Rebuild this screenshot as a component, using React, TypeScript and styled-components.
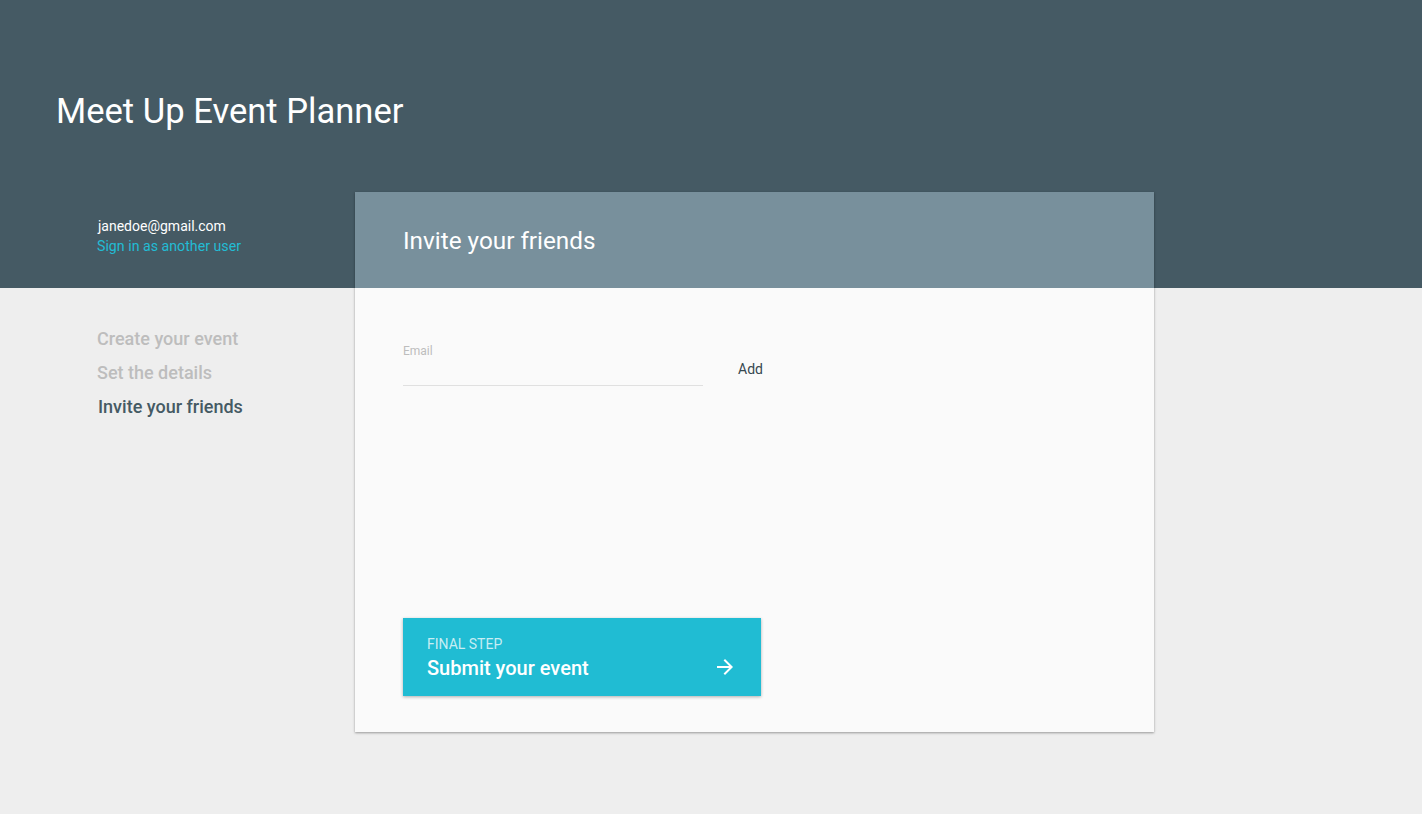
import React from "react";
import styled, { createGlobalStyle } from "styled-components";

const Global = createGlobalStyle`
  html, body { margin: 0; padding: 0; }
  body {
    font-family: Roboto, "Noto Sans", Arial, sans-serif;
    background: linear-gradient(#455a64 0, #455a64 288px, #eeeeee 288px);
    min-height: 814px;
    -webkit-font-smoothing: antialiased;
  }
`;

const Page = styled.div`
  min-height: 814px;
`;

const Header = styled.header`
  height: 192px;
  box-sizing: border-box;
  padding: 30px 0 0 56px;
  display: flex;
  align-items: center;
`;

const Title = styled.h1`
  margin: 0;
  font-size: 34.6px;
  font-weight: 400;
  color: #ffffff;
  line-height: 40px;
`;

const Main = styled.div`
  display: flex;
  align-items: flex-start;
`;

const Sidebar = styled.aside`
  flex: none;
  width: 355px;
  box-sizing: border-box;
  padding: 24px 0 0 97px;
  display: flex;
  flex-direction: column;
`;

const UserEmail = styled.div`
  font-size: 14px;
  line-height: 20px;
  color: #ffffff;
  padding-left: 1px;
`;

const SwitchLink = styled.a`
  font-size: 14.2px;
  line-height: 20px;
  color: #22bcd4;
  text-decoration: none;
  cursor: pointer;
`;

const Steps = styled.nav`
  margin-top: 66px;
  display: flex;
  flex-direction: column;
`;

const Step = styled.div<{ $active?: boolean }>`
  font-size: 18px;
  font-weight: 500;
  line-height: 34px;
  color: ${(p) => (p.$active ? "#455a64" : "#bdbdbd")};
  padding-left: ${(p) => (p.$active ? "1px" : "0")};
`;

const Card = styled.section`
  flex: none;
  width: 799px;
  height: 540px;
  display: flex;
  flex-direction: column;
  background: #fafafa;
  box-shadow: 0 1px 2px rgba(0, 0, 0, 0.3), 0 1px 4px rgba(0, 0, 0, 0.08);
`;

const CardHeader = styled.div`
  height: 96px;
  flex: none;
  box-sizing: border-box;
  padding: 2px 0 0 48px;
  display: flex;
  align-items: center;
  background: #78909c;
`;

const CardTitle = styled.h2`
  margin: 0;
  font-size: 24.3px;
  font-weight: 400;
  color: #ffffff;
  line-height: 32px;
`;

const CardBody = styled.div`
  flex: 1;
  display: flex;
  flex-direction: column;
  padding: 56px 48px 36px;
`;

const FormRow = styled.div`
  display: flex;
  align-items: flex-end;
  gap: 35px;
`;

const Field = styled.label`
  width: 300px;
  display: flex;
  flex-direction: column;
`;

const FieldLabel = styled.span`
  font-size: 12px;
  line-height: 14px;
  color: #bdbdbd;
`;

const Input = styled.input`
  height: 27px;
  border: none;
  border-bottom: 1px solid #e0e0e0;
  background: transparent;
  outline: none;
  padding: 0;
  font-family: inherit;
  font-size: 16px;
  color: #455a64;
`;

const AddButton = styled.button`
  height: 32px;
  margin-bottom: 1px;
  padding: 0;
  border: none;
  background: transparent;
  font-family: inherit;
  font-size: 14px;
  color: #37474f;
  cursor: pointer;
`;

const Spacer = styled.div`
  flex: 1;
`;

const SubmitButton = styled.button`
  width: 358px;
  height: 78px;
  box-sizing: border-box;
  padding: 0 24px 16px;
  border: none;
  background: #20bcd3;
  box-shadow: 0 1px 3px rgba(0, 0, 0, 0.3);
  display: flex;
  align-items: flex-end;
  justify-content: space-between;
  text-align: left;
  cursor: pointer;
  font-family: inherit;
`;

const SubmitText = styled.div`
  display: flex;
  flex-direction: column;
  gap: 4px;
`;

const SubmitKicker = styled.span`
  font-size: 14px;
  line-height: 16px;
  color: rgba(255, 255, 255, 0.75);
  text-transform: uppercase;
`;

const SubmitLabel = styled.span`
  font-size: 20px;
  font-weight: 500;
  line-height: 24px;
  color: #ffffff;
`;

const ArrowIcon = styled.svg`
  flex: none;
  display: block;
  margin-bottom: 1px;
`;

const Arrow = () => (
  <ArrowIcon width="24" height="24" viewBox="0 0 24 24" fill="#ffffff" aria-hidden>
    <path d="M12 4l-1.41 1.41L16.17 11H4v2h12.17l-5.58 5.59L12 20l8-8z" />
  </ArrowIcon>
);

export default function App() {
  return (
    <Page>
      <Global />
      <Header>
        <Title>Meet Up Event Planner</Title>
      </Header>
      <Main>
        <Sidebar>
          <UserEmail>janedoe@gmail.com</UserEmail>
          <SwitchLink>Sign in as another user</SwitchLink>
          <Steps>
            <Step>Create your event</Step>
            <Step>Set the details</Step>
            <Step $active>Invite your friends</Step>
          </Steps>
        </Sidebar>
        <Card>
          <CardHeader>
            <CardTitle>Invite your friends</CardTitle>
          </CardHeader>
          <CardBody>
            <FormRow>
              <Field>
                <FieldLabel>Email</FieldLabel>
                <Input type="email" />
              </Field>
              <AddButton>Add</AddButton>
            </FormRow>
            <Spacer />
            <SubmitButton>
              <SubmitText>
                <SubmitKicker>Final step</SubmitKicker>
                <SubmitLabel>Submit your event</SubmitLabel>
              </SubmitText>
              <Arrow />
            </SubmitButton>
          </CardBody>
        </Card>
      </Main>
    </Page>
  );
}
